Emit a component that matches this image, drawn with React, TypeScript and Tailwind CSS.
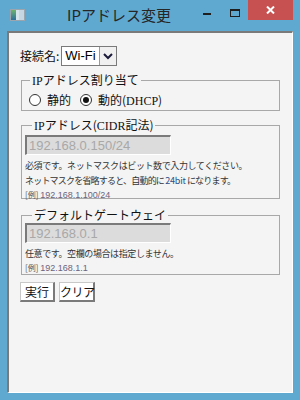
import { useState } from 'react';

const jp = { fontFamily: '"Noto Sans CJK JP", "Noto Sans", sans-serif' };
const serif = { fontFamily: '"Liberation Serif", serif' };

export default function App() {
    const [mode, setMode] = useState<'static' | 'dhcp'>('dhcp');

    return (
        <div className="w-[300px] h-[400px] bg-[#5fa9d0] flex flex-col" style={jp}>
            {/* Title bar */}
            <div className="h-[31px] flex items-start relative">
                <div className="mt-[9px] ml-[10px] w-[15px] h-[12px] bg-white border border-[#9aa5ad] flex">
                    <div className="w-[5px] h-full bg-gradient-to-b from-[#6fb26a] to-[#2f6f9a]" />
                    <div className="w-[3px] h-full bg-[#d8e4ec]" />
                    <div className="flex-1 h-full bg-[#c6d6e2]" />
                </div>
                <div className="ml-[42px] mt-[5px] text-[15px] leading-[20px] text-[#262626]">IPアドレス変更</div>
                <div className="ml-auto flex items-start">
                    <div className="mt-[13px] mr-[19px] w-[8px] h-[2px] bg-[#1f1f1f]" />
                    <div className="mt-[9px] mr-[8px] w-[10px] h-[8px] border border-[#1f1f1f] border-t-2" />
                    <div className="w-[45px] h-[20px] bg-[#c75050] mr-[7px] flex items-center justify-center">
                        <svg width="9" height="8" viewBox="0 0 9 8">
                            <path d="M1 0.5 L8 7.5 M8 0.5 L1 7.5" stroke="white" strokeWidth="2" />
                        </svg>
                    </div>
                </div>
            </div>

            {/* Client area */}
            <div className="mx-[7px] h-[362px] bg-[#f4f4f4] border-l-2 border-t-2 border-l-[#7a7a7a] border-t-[#7a7a7a] border-r border-b border-r-white border-b-white">
                <div className="pl-[11px] pr-[12px] pt-[13px] text-[12px] text-[#111]">
                    {/* Connection name */}
                    <div className="flex items-center h-[20px]">
                        <span className="leading-none">接続名:</span>
                        <div className="ml-[2px] h-[20px] w-[56px] bg-white border border-[#7a7a7a] flex items-stretch">
                            <span className="flex-1 pl-[3px] text-[13px] leading-[18px] text-[#000]" style={{ fontFamily: '"Liberation Sans", Arial, sans-serif' }}>Wi-Fi</span>
                            <div className="w-[17px] border-l border-[#9a9a9a] bg-[#f0f0f0] flex items-center justify-center">
                                <svg width="10" height="7" viewBox="0 0 10 7">
                                    <path d="M1 1 L5 5 L9 1" fill="none" stroke="#1a1a3a" strokeWidth="2" />
                                </svg>
                            </div>
                        </div>
                    </div>

                    {/* Assignment */}
                    <fieldset className="mt-[7px] ml-[1px] border border-[#a8a8a8] h-[38px] px-[7px]">
                        <legend className="ml-[1px] px-[2px] text-[12px] leading-[14px]">
                            <span style={serif}>IP</span>アドレス割り当て
                        </legend>
                        <div className="flex items-center h-[20px] mt-[2px]">
                            <Radio checked={mode === 'static'} onClick={() => setMode('static')} label="静的" />
                            <div className="w-[9px]" />
                            <Radio
                                checked={mode === 'dhcp'}
                                onClick={() => setMode('dhcp')}
                                label={<>動的(<span style={serif}>DHCP</span>)</>}
                            />
                        </div>
                    </fieldset>

                    {/* IP address */}
                    <fieldset className="mt-[7px] ml-[1px] border border-[#a8a8a8] h-[81px] pl-[3px]">
                        <legend className="ml-[7px] px-[2px] text-[12px] leading-[14px]">
                            <span style={serif}>IP</span>アドレス(<span style={serif}>CIDR</span>記法)
                        </legend>
                        <div className="mt-[2px]">
                            <DisabledInput value="192.168.0.150/24" />
                        </div>
                        <p className="mt-[3px] whitespace-nowrap text-[9px] tracking-[-0.4px] leading-[15px] text-[#333]">必須です。ネットマスクはビット数で入力してください。</p>
                        <p className="whitespace-nowrap text-[9px] tracking-[-0.8px] leading-[15px] text-[#333]">ネットマスクを省略すると、自動的に <span className="text-[#2a4f8a] tracking-[-0.2px]">24bit</span> になります。</p>
                        <p className="whitespace-nowrap text-[8px] leading-[13px] text-[#555]">[例] <span style={{ fontFamily: '"Liberation Sans", Arial, sans-serif' }} className="text-[9px] text-[#6a6480]">192.168.1.100/24</span></p>
                    </fieldset>

                    {/* Gateway */}
                    <fieldset className="mt-[9px] ml-[1px] border border-[#a8a8a8] h-[67px] pl-[3px]">
                        <legend className="ml-[7px] px-[2px] text-[12px] leading-[14px]">デフォルトゲートウェイ</legend>
                        <div className="mt-[1px]">
                            <DisabledInput value="192.168.0.1" />
                        </div>
                        <p className="mt-[3px] whitespace-nowrap text-[9px] tracking-[-0.4px] leading-[15px] text-[#333]">任意です。空欄の場合は指定しません。</p>
                        <p className="whitespace-nowrap text-[8px] leading-[13px] text-[#555]">[例] <span style={{ fontFamily: '"Liberation Sans", Arial, sans-serif' }} className="text-[9px] text-[#6a6480]">192.168.1.1</span></p>
                    </fieldset>

                    {/* Buttons */}
                    <div className="mt-[7px] flex gap-[4px]">
                        <button className="w-[35px] h-[20px] whitespace-nowrap p-0 bg-white border border-[#c8c8c8] border-r-2 border-b-2 border-r-[#7a7a7a] border-b-[#7a7a7a] text-[12px] leading-none">実行</button>
                        <button className="w-[36px] h-[20px] whitespace-nowrap p-0 bg-white border border-[#c8c8c8] border-r-2 border-b-2 border-r-[#7a7a7a] border-b-[#7a7a7a] text-[12px] tracking-[-0.5px] leading-none">クリア</button>
                    </div>
                </div>
            </div>
        </div>
    );
}

function Radio({ checked, onClick, label }: { checked: boolean; onClick: () => void; label: React.ReactNode }) {
    return (
        <button onClick={onClick} className="flex items-center gap-[6px] text-[12px] whitespace-nowrap">
            <span className="w-[12px] h-[12px] rounded-full border border-[#333] bg-white flex items-center justify-center">
                {checked && <span className="w-[6px] h-[6px] rounded-full bg-[#111]" />}
            </span>
            <span className="leading-none">{label}</span>
        </button>
    );
}

function DisabledInput({ value }: { value: string }) {
    return (
        <div className="w-[146px] h-[20px] bg-[#dcdcdc] border-l-2 border-t-2 border-l-[#7a7a7a] border-t-[#7a7a7a] border-r border-b border-r-white border-b-white pl-[2px] text-[13px] leading-[17px] text-[#a8a8a8]" style={{ fontFamily: '"Liberation Sans", Arial, sans-serif' }}>
            {value}
        </div>
    );
}
